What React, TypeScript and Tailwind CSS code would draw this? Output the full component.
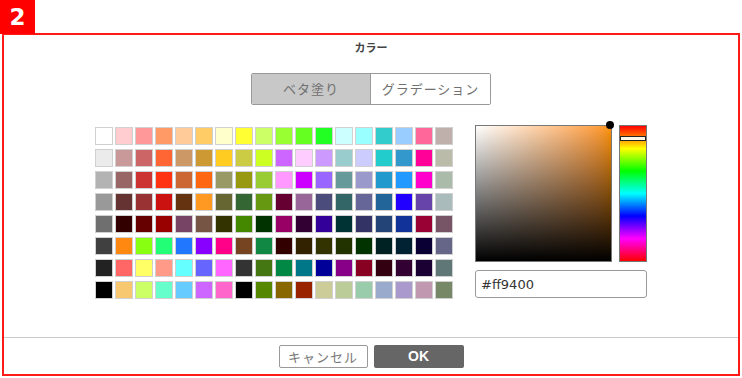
import { useState } from "react";

// 18 columns x 8 rows of preset colours
const palette: string[][] = [
  ["#ffffff", "#ffccd0", "#ff9999", "#ff9966", "#ffcc99", "#ffcc66", "#ffffcc", "#ffff33", "#ccff66", "#99ff33", "#66ff22", "#22ff22", "#ccffff", "#99ffff", "#33cccc", "#99ccff", "#ff6699", "#c0b0ac"],
  ["#ebebeb", "#c99999", "#cc6666", "#ff6633", "#cc9966", "#cc9933", "#ffcc22", "#cccc44", "#ccff22", "#cc66ff", "#ffccff", "#cc99ff", "#99cccc", "#ccccff", "#22cccc", "#3399cc", "#ff0099", "#bbbbaa"],
  ["#b3b3b3", "#996666", "#cc3333", "#ff3311", "#cc6633", "#ff6611", "#999966", "#999911", "#99cc33", "#ff99ff", "#cc00ff", "#9966ff", "#669999", "#9999cc", "#2299cc", "#2299ff", "#ff00cc", "#aabbaa"],
  ["#999999", "#663333", "#993333", "#cc1111", "#663311", "#ff9922", "#666633", "#336633", "#669911", "#660033", "#996699", "#4c4c7c", "#336666", "#666699", "#226699", "#2200ff", "#6644aa", "#aabbbb"],
  ["#6f6f6f", "#330000", "#660000", "#990000", "#774466", "#775544", "#333300", "#448800", "#003300", "#990066", "#330033", "#330099", "#003333", "#333366", "#224477", "#113399", "#990033", "#775566"],
  ["#404040", "#ff8811", "#88ff11", "#22ff77", "#2277ff", "#8800ff", "#ff0088", "#774422", "#118844", "#330000", "#332200", "#333300", "#223300", "#003300", "#002222", "#002233", "#0a0033", "#666688"],
  ["#222222", "#ff6666", "#ffff66", "#ff9988", "#66ffff", "#6666ff", "#ff66ff", "#333333", "#447711", "#008844", "#007788", "#000099", "#880088", "#880022", "#330011", "#330033", "#1a0033", "#5f7777"],
  ["#000000", "#f8c870", "#ccff66", "#66ffcc", "#66ccff", "#cc66ff", "#ff66cc", "#000000", "#558800", "#886600", "#992200", "#cccc99", "#bbcc99", "#99ccaa", "#99aacc", "#aa99cc", "#c099b0", "#778866"],
];

export default function App() {
  const [mode, setMode] = useState<"solid" | "gradient">("solid");
  const [hex, setHex] = useState("#ff9400");

  return (
    <div className="relative w-[742px] h-[378px] bg-white overflow-hidden font-['Liberation_Sans','Noto_Sans_CJK_JP',sans-serif]">
      <div className="absolute top-0 left-0 z-10 w-[35px] h-[34px] bg-[#ff0000] text-white text-[23px] font-bold leading-none flex items-center justify-center font-['DejaVu_Sans',sans-serif]">
        2
      </div>

      <div className="mt-[33px] mx-[2px] h-[343px] border-2 border-[#ff1a1a] flex flex-col">
        <div className="flex-1 flex flex-col items-center">
          <div className="pt-[5px] h-[19px] text-[11px] leading-[14px] font-semibold text-[#444] font-['Noto_Sans_CJK_JP',sans-serif]">
            カラー
          </div>

          <div className="mt-[19px] flex w-[240px] h-[32px] border border-[#999] rounded-[2px] overflow-hidden text-[13px] tracking-[1px] text-[#707070] font-['Noto_Sans_CJK_JP',sans-serif]">
            <button
              onClick={() => setMode("solid")}
              className={`w-[119px] flex items-center justify-center border-r border-[#999] ${mode === "solid" ? "bg-[#c8c8c8]" : "bg-white"}`}
            >
              ベタ塗り
            </button>
            <button
              onClick={() => setMode("gradient")}
              className={`flex-1 flex items-center justify-center ${mode === "gradient" ? "bg-[#c8c8c8]" : "bg-white"}`}
            >
              グラデーション
            </button>
          </div>

          <div className="mt-[20px] w-full pl-[91px] flex gap-[22px]">
            <div className="mt-[2px] grid grid-cols-[repeat(18,18px)] auto-rows-[18px] gap-x-[2px] gap-y-[4px]">
              {palette.flat().map((c, i) => (
                <button
                  key={i}
                  onClick={() => setHex(c)}
                  className="border-[1.5px] border-[#d0d0d0]"
                  style={{ backgroundColor: c }}
                />
              ))}
            </div>

            <div className="flex flex-col w-[172px]">
              <div className="flex gap-[7px]">
                <div className="relative w-[137px] h-[137px] border border-[#777] bg-linear-to-r from-white to-[#ff9400]">
                  <div className="absolute inset-0 bg-linear-to-t from-black to-transparent" />
                  <div className="absolute -top-[5px] -right-[3px] w-[8px] h-[8px] rounded-full bg-black" />
                </div>
                <div className="relative w-[28px] h-[137px] border border-[#777] bg-[linear-gradient(to_bottom,#f00,#ff0,#0f0,#0ff,#00f,#f0f,#f00)]">
                  <div className="absolute top-[10px] left-0 right-0 h-[5px] border border-[#222] bg-[#fff8e8]" />
                </div>
              </div>
              <input
                value={hex}
                onChange={(e) => setHex(e.target.value)}
                className="mt-[8px] h-[28px] w-full border border-[#999] rounded-[3px] px-[5px] text-[13px] text-[#333] outline-none font-['DejaVu_Sans',sans-serif]"
              />
            </div>
          </div>
        </div>

        <div className="h-[37px] border-t border-[#ccc] flex items-start justify-center gap-[6px] pt-[7px]">
          <button className="w-[89px] h-[23px] border border-[#999] rounded-[2px] bg-white text-[13px] tracking-[1px] text-[#777] font-['Noto_Sans_CJK_JP',sans-serif] flex items-center justify-center">
            キャンセル
          </button>
          <button className="w-[90px] h-[23px] rounded-[2px] bg-[#666] text-white text-[14px] font-bold flex items-center justify-center">
            OK
          </button>
        </div>
      </div>
    </div>
  );
}
